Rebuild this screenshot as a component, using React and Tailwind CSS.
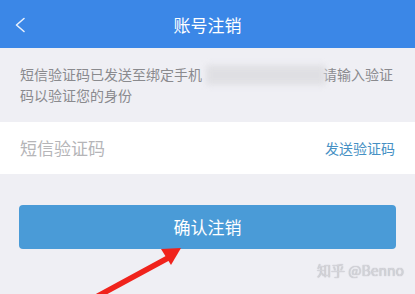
export default function App() {
  const font = { fontFamily: '"Noto Sans CJK SC", "Noto Sans", sans-serif' };

  return (
    <div className="relative w-[415px] h-[294px] overflow-hidden bg-[#efeff4]" style={font}>
      {/* Header */}
      <div className="relative h-12 bg-[#3b87e7] flex items-center justify-center">
        <svg className="absolute left-[13px] top-[17px]" width="14" height="16" viewBox="0 0 14 16">
          <path d="M11 1.5 L3.5 8 L11 14.5" fill="none" stroke="#e8f0fc" strokeWidth="1.6" strokeLinecap="round" strokeLinejoin="round" />
        </svg>
        <h1 className="text-[17px] text-white leading-none">账号注销</h1>
      </div>

      {/* Notice */}
      <div className="relative px-5 pt-4 text-[14px] leading-[21px] text-[#8a8a8e]">
        <p>短信验证码已发送至绑定手机<span className="inline-block w-[121px]"></span>请输入验证</p>
        <p>码以验证您的身份</p>
        <div className="absolute left-[206px] top-[17px] w-[120px] h-[20px] bg-[#dcdce0] blur-[3px] opacity-80"></div>
      </div>

      {/* Code input row */}
      <div className="mt-4 h-[52px] bg-white flex items-center justify-between px-5">
        <span className="text-[17px] text-[#b5b5b8]">短信验证码</span>
        <span className="text-[14px] text-[#4690c4]">发送验证码</span>
      </div>

      {/* Confirm button */}
      <div className="px-[19px] mt-[31px]">
        <button className="w-full h-11 rounded bg-[#4a9bd7] text-white text-[17px]">确认注销</button>
      </div>

      {/* Watermark */}
      <div className="absolute right-[11px] top-[260px] text-[14px] text-[#d4d4da]" style={{ textShadow: '0 0 1px #a9a9b0' }}>
        知乎 @Benno
      </div>

      {/* Red arrow */}
      <svg className="absolute left-0 top-0 pointer-events-none" width="415" height="294" viewBox="0 0 415 294">
        <path d="M98 296 L168 258" stroke="#f0231c" strokeWidth="5.5" strokeLinecap="round" />
        <polygon points="181,248 161,249 171,265" fill="#f0231c" />
      </svg>
    </div>
  );
}
